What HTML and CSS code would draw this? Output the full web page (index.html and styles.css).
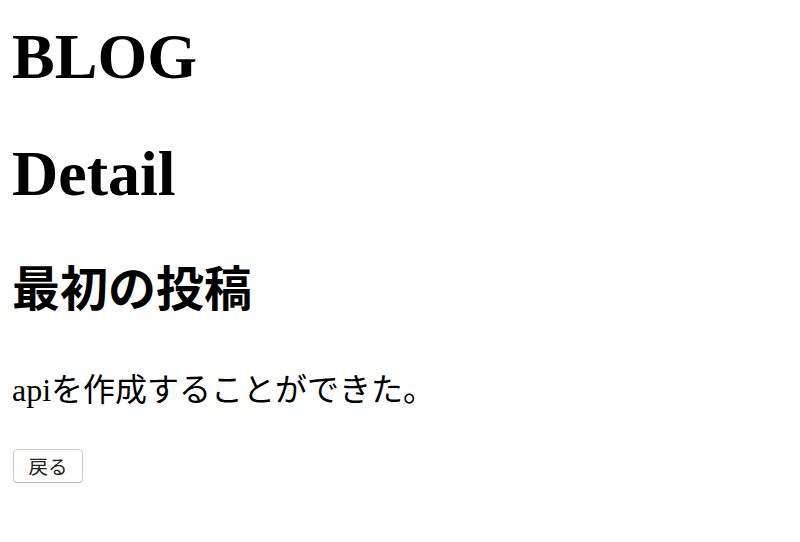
FILE: index.html
```html
<!DOCTYPE html>
<html lang="ja">
<head>
<meta charset="utf-8">
<title>BLOG</title>
<link rel="stylesheet" href="styles.css">
</head>
<body>
<div class="page">
  <h1 class="title">BLOG</h1>
  <h1 class="subtitle">Detail</h1>
  <h2 class="post-title">最初の投稿</h2>
  <p class="post-body">apiを作成することができた。</p>
  <div class="actions">
    <button class="back" type="button">戻る</button>
  </div>
</div>
</body>
</html>
```

FILE: styles.css
```css
html, body {
  margin: 0;
  padding: 0;
  background: #ffffff;
}

.page {
  padding: 0 12px;
  font-family: "Liberation Serif", "Noto Sans CJK JP", serif;
  color: #000000;
}

.title,
.subtitle {
  font-size: 64px;
  line-height: 74px;
  font-weight: bold;
  margin: 0;
}

.title {
  padding-top: 20px;
}

.subtitle {
  margin-top: 43px;
}

.post-title {
  font-size: 48px;
  line-height: 56px;
  font-weight: bold;
  margin: 51px 0 0 0;
}

.post-body {
  font-size: 32px;
  line-height: 40px;
  margin: 52px 0 0 0;
}

.actions {
  margin-top: 39px;
}

.back {
  box-sizing: border-box;
  width: 70px;
  height: 34px;
  margin: 0 0 0 1px;
  padding: 0;
  font-family: "Noto Sans CJK JP", sans-serif;
  font-size: 19.5px;
  line-height: 1;
  color: #222222;
  background: #ffffff;
  border: 1px solid #cfcfcf;
  border-bottom-color: #b8b8b8;
  border-radius: 5px;
  box-shadow: 0 1px 1px rgba(0, 0, 0, 0.12);
}
```
